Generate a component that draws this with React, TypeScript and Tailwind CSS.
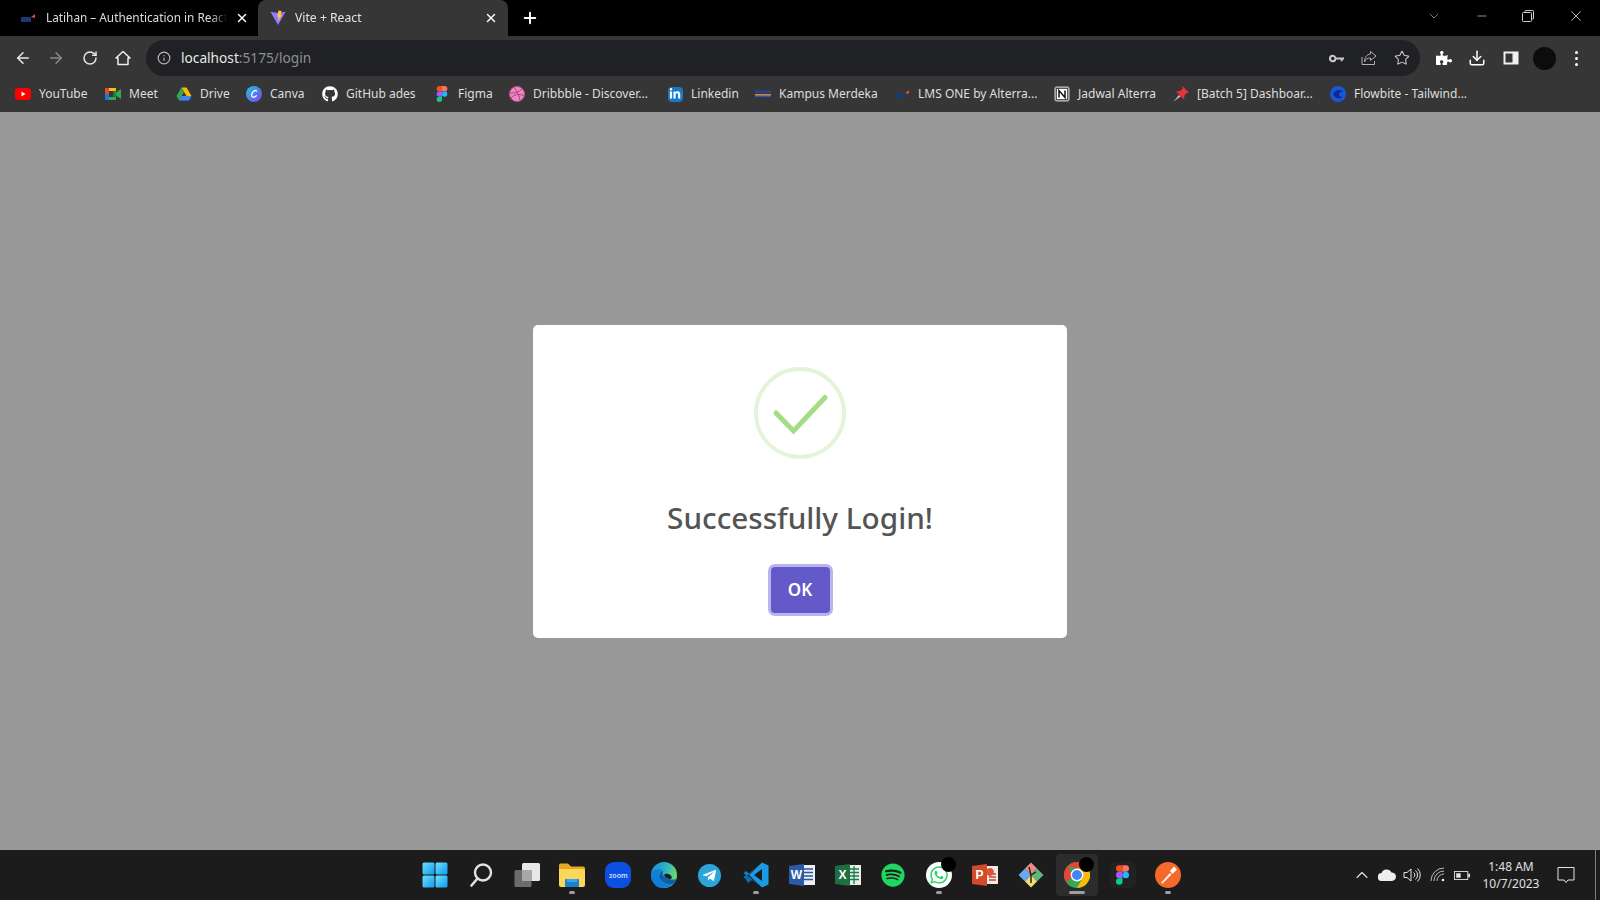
import { ReactNode } from 'react';
import { ArrowLeft, ArrowRight, RotateCw, Info, Star, X, Plus, ChevronDown, ChevronUp, Minus, Download } from 'lucide-react';
import { FaGithub, FaPuzzlePiece, FaSpotify, FaWhatsapp, FaTelegramPlane, FaLinkedinIn } from 'react-icons/fa';

const YoutubeIcon = () => (
  <svg viewBox="0 0 16 16" className="w-4 h-4">
    <rect x="0" y="2" width="16" height="12" rx="3" fill="#f00" />
    <path d="M6.5 5.5 L10.5 8 L6.5 10.5 Z" fill="#fff" />
  </svg>
);

const MeetIcon = () => (
  <svg viewBox="0 0 16 16" className="w-4 h-4">
    <rect x="0" y="2" width="4" height="6" fill="#ea4335" />
    <rect x="4" y="2" width="7" height="3" fill="#fbbc04" />
    <rect x="0" y="8" width="4" height="6" fill="#1a73e8" />
    <rect x="4" y="11" width="7" height="3" fill="#34a853" />
    <rect x="8" y="5" width="3" height="6" fill="#188038" />
    <path d="M11 6.5 L16 3 V13 L11 9.5 Z" fill="#34a853" />
  </svg>
);

const DriveIcon = () => (
  <svg viewBox="0 0 16 16" className="w-4 h-4">
    <path d="M5.5 1.5 H10.5 L15.5 10 H10.5 Z" fill="#fbbc04" />
    <path d="M5.5 1.5 L8 6 L3 14.5 L0.5 10 Z" fill="#34a853" />
    <path d="M5.5 10 H15.5 L13 14.5 H3 Z" fill="#4285f4" />
  </svg>
);

const CanvaIcon = () => (
  <svg viewBox="0 0 16 16" className="w-4 h-4">
    <defs>
      <linearGradient id="canva" x1="0" y1="0" x2="1" y2="1">
        <stop offset="0" stopColor="#1fc8db" />
        <stop offset="1" stopColor="#7a3ff2" />
      </linearGradient>
    </defs>
    <circle cx="8" cy="8" r="8" fill="url(#canva)" />
    <path d="M10.5 5 C9 3.5 6 6 5.6 9 C5.3 11.5 8 11.8 10.4 9.8" fill="none" stroke="#fff" strokeWidth="1.3" strokeLinecap="round" />
  </svg>
);

const FigmaIcon = ({ size = 'w-4 h-4' }: { size?: string }) => (
  <svg viewBox="0 0 12 18" className={size}>
    <path d="M6 0 H3 a3 3 0 0 0 0 6 H6 Z" fill="#f24e1e" />
    <path d="M6 0 H9 a3 3 0 0 1 0 6 H6 Z" fill="#ff7262" />
    <path d="M6 6 H3 a3 3 0 0 0 0 6 H6 Z" fill="#a259ff" />
    <circle cx="9" cy="9" r="3" fill="#1abcfe" />
    <path d="M6 12 H3 a3 3 0 1 0 3 3 Z" fill="#0acf83" />
  </svg>
);

const DribbbleIcon = () => (
  <svg viewBox="0 0 16 16" className="w-4 h-4" fill="none">
    <circle cx="8" cy="8" r="7.5" fill="#ea89c0" stroke="#c04f90" strokeWidth="1" />
    <path d="M5 1.5 C8 5 10.5 10 11 14.5 M1 7 C6 7.5 10 6 13 3 M2 12 C5 8.5 9.5 7.5 15 9.5" stroke="#a83a7a" strokeWidth="0.9" />
  </svg>
);

const KampusIcon = () => (
  <svg viewBox="0 0 18 16" className="w-[18px] h-4">
    <rect x="0" y="4" width="18" height="3" fill="#2d3e8f" />
    <rect x="0" y="8" width="18" height="2" fill="#c88a4a" />
    <rect x="0" y="10" width="18" height="1.5" fill="#3a4fa8" />
  </svg>
);

const OneIcon = () => (
  <svg viewBox="0 0 16 16" className="w-4 h-4">
    <rect x="1" y="7" width="10" height="5" fill="#1d3a70" />
    <path d="M11 7 L15 4 V8 Z" fill="#d9503f" />
  </svg>
);

const NotionIcon = () => (
  <svg viewBox="0 0 16 16" className="w-4 h-4">
    <rect x="0.7" y="0.7" width="14.6" height="14.6" rx="2" fill="#fff" stroke="#888" strokeWidth="1" />
    <path d="M2.2 2.2 H13.8 V13.8 H2.2 Z" fill="#fff" stroke="#111" strokeWidth="1" />
    <path d="M5 11.5 V4.5 L11 11.5 V4.5" fill="none" stroke="#111" strokeWidth="1.5" />
  </svg>
);

const PinIcon = () => (
  <svg viewBox="0 0 16 16" className="w-4 h-4">
    <path d="M0.5 15.5 L6 9 L7.5 10.5 Z" fill="#c9c9c9" />
    <path d="M9.500 0 L16 6.500 L13.500 7 L11.500 9.500 L11 13.500 L3 5.500 L7 5 L9.500 3 Z" fill="#e8323c" />
  </svg>
);

const FlowbiteIcon = () => (
  <svg viewBox="0 0 16 16" className="w-4 h-4">
    <circle cx="8" cy="8" r="8" fill="#1a56db" />
    <path d="M3 8 C5 3.5 11 3 13 6 C10 5.5 8.5 7 9 9 C10 11 12 11 13 10.5 C11 13.5 5.5 13.5 3 8 Z" fill="#0b2d8a" />
  </svg>
);

const bookmarks: { label: string; icon: ReactNode; width: string }[] = [
  { label: 'YouTube', icon: <YoutubeIcon />, width: 'w-[90px]' },
  { label: 'Meet', icon: <MeetIcon />, width: 'w-[71px]' },
  { label: 'Drive', icon: <DriveIcon />, width: 'w-[70px]' },
  { label: 'Canva', icon: <CanvaIcon />, width: 'w-[76px]' },
  { label: 'GitHub ades', icon: <FaGithub className="w-4 h-4 text-white" />, width: 'w-[112px]' },
  { label: 'Figma', icon: <FigmaIcon />, width: 'w-[75px]' },
  { label: 'Dribbble - Discover...', icon: <DribbbleIcon />, width: 'w-[158px]' },
  {
    label: 'Linkedin',
    icon: (
      <span className="w-[15px] h-[15px] rounded-sm bg-[#1a78c9] flex items-center justify-center">
        <FaLinkedinIn className="w-3 h-3 text-white" />
      </span>
    ),
    width: 'w-[88px]',
  },
  { label: 'Kampus Merdeka', icon: <KampusIcon />, width: 'w-[139px]' },
  { label: 'LMS ONE by Alterra...', icon: <OneIcon />, width: 'w-[160px]' },
  { label: 'Jadwal Alterra', icon: <NotionIcon />, width: 'w-[119px]' },
  { label: '[Batch 5] Dashboar...', icon: <PinIcon />, width: 'w-[157px]' },
  { label: 'Flowbite - Tailwind...', icon: <FlowbiteIcon />, width: 'w-[150px]' },
];

const WindowsIcon = () => (
  <svg viewBox="0 0 26 26" className="w-[26px] h-[26px]">
    <defs>
      <linearGradient id="win" x1="0" y1="0" x2="1" y2="1">
        <stop offset="0" stopColor="#6fe0fb" />
        <stop offset="1" stopColor="#0f9bf0" />
      </linearGradient>
    </defs>
    <rect x="0.5" y="0.5" width="12" height="12" rx="1.5" fill="url(#win)" />
    <rect x="13.5" y="0.5" width="12" height="12" rx="1.5" fill="url(#win)" />
    <rect x="0.5" y="13.5" width="12" height="12" rx="1.5" fill="url(#win)" />
    <rect x="13.5" y="13.5" width="12" height="12" rx="1.5" fill="url(#win)" />
  </svg>
);

const SearchIcon = () => (
  <svg viewBox="0 0 26 26" className="w-[26px] h-[26px]" fill="none">
    <circle cx="15" cy="10.5" r="8" stroke="#e2e2e2" strokeWidth="2.4" />
    <path d="M9.5 16.5 L3.5 23.5" stroke="#e2e2e2" strokeWidth="2.6" strokeLinecap="round" />
  </svg>
);

const TaskViewIcon = () => (
  <svg viewBox="0 0 26 26" className="w-[26px] h-[26px]">
    <rect x="0.5" y="8" width="17" height="17" rx="1.5" fill="#6c6c6c" />
    <rect x="8" y="1" width="18" height="18" rx="1.5" fill="#e8e8e8" />
    <rect x="8" y="8" width="10" height="11" fill="#a8a8a8" />
  </svg>
);

const ExplorerIcon = () => (
  <svg viewBox="0 0 26 24" className="w-[26px] h-6">
    <path d="M0 2 a1.5 1.5 0 0 1 1.5 -1.5 H9 L12 3.5 H24 a2 2 0 0 1 2 2 V8 H0 Z" fill="#e7a823" />
    <path d="M0 6 H24 a2 2 0 0 1 2 2 V22 a2 2 0 0 1 -2 2 H2 a2 2 0 0 1 -2 -2 Z" fill="#fbd85a" />
    <rect x="6" y="16" width="14" height="8" rx="1" fill="#1d7fd0" />
    <rect x="8" y="16" width="10" height="3" fill="#38a5ec" />
  </svg>
);

const ZoomIcon = () => (
  <div className="w-[26px] h-[26px] rounded-[9px] bg-[#0b50e0] flex items-center justify-center text-[7px] leading-none text-[#cfe0ff] font-semibold">
    zoom
  </div>
);

const EdgeIcon = () => (
  <svg viewBox="0 0 26 26" className="w-[26px] h-[26px]">
    <defs>
      <linearGradient id="edgeTop" x1="0" y1="0.2" x2="1" y2="0.5">
        <stop offset="0" stopColor="#1791d8" />
        <stop offset="0.55" stopColor="#2cb4c8" />
        <stop offset="1" stopColor="#74dd5c" />
      </linearGradient>
    </defs>
    <circle cx="13" cy="13" r="13" fill="url(#edgeTop)" />
    <path d="M0 13 C1 8 7 6 12 8 C8 9 7 12 8 15 C10 20 16 23 22 22 C17 27 9 27 5 24 C2 21 0 17 0 13 Z" fill="#1180d4" />
    <path d="M8 15 C8 11 10 9 12 9 C11 12 12 14 15 16 C18 17.500 22 18 25.500 17 C24.500 19.500 23.500 21 22 22 C16 23 10 20 8 15 Z" fill="#0d5fae" />
    <path d="M13 13 C14 11 19 11 20.500 14.500 C21 16 20.500 16.800 19.500 17 C16.500 17 14 15.500 13 13 Z" fill="#1c1c1c" />
  </svg>
);

const VscodeIcon = () => (
  <svg viewBox="0 0 26 26" className="w-[26px] h-[26px]">
    <path d="M19 0.5 L25.5 3.5 V22.5 L19 25.5 L6 13 Z" fill="#1a9be8" />
    <path d="M19 7 L11 13 L19 19 Z" fill="#1c1c1c" />
    <path d="M19 0.5 L4 14 L0.5 11 L3 9 L6 11.5 Z" fill="#0f7fc9" />
    <path d="M2.5 17 L0.5 15 L3 13 L6 14.5 L19 25.5 L9 18 L5 21 Z" fill="#0d6cb0" />
  </svg>
);

const WordIcon = () => (
  <svg viewBox="0 0 26 24" className="w-[26px] h-6">
    <rect x="9" y="2" width="17" height="20" fill="#e9eff7" />
    <path d="M14 6 H24 M14 9.5 H24 M14 13 H24 M14 16.5 H24" stroke="#2b5797" strokeWidth="1.6" />
    <path d="M0 3 L15 1 V23 L0 21 Z" fill="#2a5aa8" />
    <text x="7.5" y="16" textAnchor="middle" fontSize="12" fontWeight="700" fill="#fff" fontFamily="Liberation Sans">W</text>
  </svg>
);

const ExcelIcon = () => (
  <svg viewBox="0 0 26 24" className="w-[26px] h-6">
    <rect x="11" y="2" width="15" height="20" fill="#e6f0e9" />
    <path d="M15 6 H24 M15 9.5 H24 M15 13 H24 M15 16.5 H24 M19 3 V21" stroke="#1f7a47" strokeWidth="1.3" />
    <path d="M0 3 L15 1 V23 L0 21 Z" fill="#1d6f42" />
    <text x="7.5" y="16" textAnchor="middle" fontSize="12" fontWeight="700" fill="#fff" fontFamily="Liberation Sans">X</text>
  </svg>
);

const PowerpointIcon = () => (
  <svg viewBox="0 0 26 24" className="w-[26px] h-6">
    <rect x="11" y="3" width="15" height="18" fill="#f5e7e1" />
    <path d="M17 11 H24 M17 14 H24 M17 17 H24" stroke="#c8452b" strokeWidth="1.5" />
    <path d="M18 5 a4 4 0 1 1 -0.1 0 Z" fill="#d9553a" />
    <path d="M0 3 L15 1 V23 L0 21 Z" fill="#d24a2a" />
    <text x="7.5" y="16" textAnchor="middle" fontSize="12" fontWeight="700" fill="#fff" fontFamily="Liberation Sans">P</text>
  </svg>
);

const DiamondIcon = () => (
  <svg viewBox="0 0 26 26" className="w-[26px] h-[26px]">
    <path d="M13 0.5 L19 6.5 L13 13 L7 6.5 Z" fill="#f08a8a" />
    <path d="M0.5 13 L7 6.5 L13 13 L7 19.5 Z" fill="#6aa9f2" />
    <path d="M25.5 13 L19 6.5 L13 13 L19 19.5 Z" fill="#5fb878" />
    <path d="M13 25.5 L7 19.5 L13 13 L19 19.5 Z" fill="#f5de6f" />
    <path d="M11 5 L13 13 V21 M13 13 L18 10" stroke="#1c1c1c" strokeWidth="1.4" fill="none" />
  </svg>
);

const ChromeIcon = () => (
  <svg viewBox="0 0 26 26" className="w-[26px] h-[26px]">
    <circle cx="13" cy="13" r="13" fill="#34a853" />
    <path d="M13 0 A13 13 0 0 1 24.3 6.5 L13 6.5 L13 6.5 L4.2 3.5 A13 13 0 0 1 13 0 Z" fill="#ea4335" />
    <path d="M4.2 3.5 L9 14 L2.5 20.5 A13 13 0 0 1 4.2 3.5 Z" fill="#ea4335" />
    <path d="M24.3 6.5 A13 13 0 0 1 13 26 L18.5 16 L13 6.5 Z" fill="#fbbc04" />
    <circle cx="13" cy="13" r="6.4" fill="#fff" />
    <circle cx="13" cy="13" r="5" fill="#4285f4" />
  </svg>
);

const PostmanIcon = () => (
  <svg viewBox="0 0 26 26" className="w-[26px] h-[26px]">
    <circle cx="13" cy="13" r="13" fill="#f5692c" />
    <path d="M6 21 L15 11 L16.5 12.5 L7.5 21.5 Z" fill="#fff" />
    <path d="M15 9 L19 4.5 L22 7.5 L17.5 12 Z" fill="#fff" />
  </svg>
);

const taskbarApps: { key: string; icon: ReactNode; mark?: string; badge?: boolean; active?: boolean }[] = [
  { key: 'start', icon: <WindowsIcon /> },
  { key: 'search', icon: <SearchIcon /> },
  { key: 'taskview', icon: <TaskViewIcon /> },
  { key: 'explorer', icon: <ExplorerIcon />, mark: 'w-[6px]' },
  { key: 'zoom', icon: <ZoomIcon /> },
  { key: 'edge', icon: <EdgeIcon /> },
  { key: 'telegram', icon: <div className="w-[23px] h-[23px] rounded-full bg-[#2ba5dc] flex items-center justify-center"><FaTelegramPlane className="w-[15px] h-[15px] text-white" /></div> },
  { key: 'vscode', icon: <VscodeIcon />, mark: 'w-[6px]' },
  { key: 'word', icon: <WordIcon /> },
  { key: 'excel', icon: <ExcelIcon /> },
  { key: 'spotify', icon: <FaSpotify className="w-[24px] h-[24px] text-[#1ed760]" /> },
  { key: 'whatsapp', icon: <div className="w-[26px] h-[26px] rounded-full bg-white flex items-center justify-center"><FaWhatsapp className="w-[20px] h-[20px] text-[#25d366]" /></div>, mark: 'w-[6px]', badge: true },
  { key: 'powerpoint', icon: <PowerpointIcon /> },
  { key: 'diamond', icon: <DiamondIcon /> },
  { key: 'chrome', icon: <ChromeIcon />, mark: 'w-4', badge: true, active: true },
  { key: 'figma', icon: <div className="w-[26px] h-[26px] rounded-md bg-[#222] flex items-center justify-center"><FigmaIcon size="w-[13px] h-5" /></div> },
  { key: 'postman', icon: <PostmanIcon />, mark: 'w-[6px]' },
];

function Tab({ title, icon, active, width }: { title: string; icon: ReactNode; active?: boolean; width: string }) {
  return (
    <div className={`${width} h-9 flex items-center shrink-0 ${active ? 'bg-[#363636] rounded-t-lg text-[#e4e4e4] pl-3 pr-[10px]' : 'text-[#dcdcdc] pl-[20px] pr-[9px]'}`}>
      <span className="w-4 mr-[9px] flex justify-center shrink-0">{icon}</span>
      <span className={`flex-1 overflow-hidden whitespace-nowrap [mask-image:linear-gradient(to_left,transparent,black_16px)] ${active ? 'text-[12.2px]' : 'ml-px text-[11.8px]'}`}>{title}</span>
      <X className="w-[14px] h-[14px] ml-2 shrink-0 text-white" strokeWidth={2.4} />
    </div>
  );
}

function App() {
  return (
    <div className="w-[1600px] h-[900px] flex flex-col overflow-hidden bg-[#989898] font-['Noto_Sans','Open_Sans',sans-serif]">
      {/* Tab strip */}
      <div className="h-9 bg-black flex items-center shrink-0">
        <Tab title="Latihan – Authentication in React" icon={<OneIcon />} width="w-[258px]" />
        <Tab
          title="Vite + React"
          active
          width="w-[250px]"
          icon={
            <svg viewBox="0 0 18 18" className="w-[18px] h-[18px]">
              <path d="M0.5 2 L9 3.5 L17.5 2 L9 17 Z" fill="#8f7bff" />
              <path d="M9.5 0.5 L13 1 L12 6 L13.5 5.5 L9 13 L9.8 7.5 L8 8 Z" fill="#ffc62e" />
            </svg>
          }
        />
        <Plus className="w-[18px] h-[18px] ml-[13px] text-white" strokeWidth={2.6} />
        <div className="ml-auto flex items-center text-[#d0d0d0]">
          <ChevronDown className="w-[16px] h-[16px] mr-[33px] -mt-1 text-[#9a9a9a]" strokeWidth={1.2} />
          <Minus className="w-[14px] h-[14px] mr-[33px] -mt-1" strokeWidth={1.2} />
          <svg viewBox="0 0 12 12" className="w-3 h-3 mr-[33px] -mt-1" fill="none" stroke="#d0d0d0" strokeWidth="1">
            <rect x="0.5" y="2.5" width="9" height="9" rx="1" />
            <path d="M3 2.5 V1.5 a1 1 0 0 1 1 -1 H10.5 a1 1 0 0 1 1 1 V8 a1 1 0 0 1 -1 1 H9.5" />
          </svg>
          <X className="w-[18px] h-[18px] mr-[15px] -mt-1" strokeWidth={1.1} />
        </div>
      </div>

      {/* Toolbar */}
      <div className="h-[40px] bg-[#363636] flex items-end shrink-0">
        <div className="h-9 w-full flex items-center pl-[14px]">
          <ArrowLeft className="w-[18px] h-[18px] text-[#e8e8e8]" strokeWidth={2} />
          <ArrowRight className="w-[18px] h-[18px] ml-[15px] text-[#8a8a8a]" strokeWidth={2} />
          <RotateCw className="w-[16px] h-[16px] ml-[17px] text-[#e8e8e8]" strokeWidth={2.2} />
          <svg viewBox="0 0 16 16" className="w-4 h-4 ml-[17px]" fill="none" stroke="#f0f0f0" strokeWidth="1.5">
            <path d="M1 8 L8 1.5 L15 8 H13 V14.500 H3 V8 Z" strokeLinejoin="round" />
          </svg>
          <div className="w-[1274px] h-9 ml-[15px] rounded-full bg-[#202124] flex items-center pl-[11px] pr-[10px]">
            <Info className="w-[14px] h-[14px] text-[#b8b8b8]" strokeWidth={2} />
            <span className="ml-[10px] text-[13.7px] text-[#e8e8e8]">
              localhost<span className="text-[#8f8f8f]">:5175/login</span>
            </span>
            <div className="ml-auto flex items-center gap-[17px] text-[#c8c8c8]">
              <svg viewBox="0 0 16 16" className="w-[15px] h-[15px]" fill="#c8c8c8">
                <path fillRule="evenodd" d="M4 4 a4 4 0 0 1 3.8 2.8 H16 V9 H14.5 V11 H12.5 V9 H7.8 A4 4 0 1 1 4 4 Z M4 6.2 a1.8 1.8 0 1 0 0 3.6 a1.8 1.8 0 0 0 0 -3.6 Z" />
              </svg>
              <svg viewBox="0 0 16 16" className="w-[16px] h-[16px]" fill="none" stroke="#b0b0b0" strokeWidth="1">
                <path d="M1 7 V14.500 H13.500 V11" />
                <path d="M9.500 1.500 L15 6 L9.500 10.500 V8 C6.500 8 4.500 9 3.500 12 C3.500 7.500 5.500 4.500 9.500 4 Z" />
              </svg>
              <Star className="w-[16px] h-[16px]" strokeWidth={1.6} />
            </div>
          </div>
          <FaPuzzlePiece className="w-[16px] h-[16px] ml-[16px] text-white" />
          <Download className="w-[18px] h-[18px] ml-[16px] text-white" strokeWidth={2} />
          <svg viewBox="0 0 16 16" className="w-4 h-4 ml-[17px]">
            <rect x="0.500" y="1.500" width="15" height="13" fill="#f0f0f0" />
            <rect x="2.500" y="3.500" width="7" height="9" fill="#363636" />
          </svg>
          <div className="w-[23px] h-[23px] ml-[14px] rounded-full bg-[#0c0c0c]" />
          <div className="ml-[19px] flex flex-col gap-[3px]">
            <span className="w-[3px] h-[3px] rounded-full bg-white" />
            <span className="w-[3px] h-[3px] rounded-full bg-white" />
            <span className="w-[3px] h-[3px] rounded-full bg-white" />
          </div>
        </div>
      </div>

      {/* Bookmarks bar */}
      <div className="h-9 bg-[#363636] flex items-center pl-[15px] shrink-0">
        {bookmarks.map((b) => (
          <div key={b.label} className={`${b.width} shrink-0 flex items-center`}>
            <span className="w-4 flex justify-center shrink-0">{b.icon}</span>
            <span className="ml-[8px] text-[12px] text-[#dedede] whitespace-nowrap">{b.label}</span>
          </div>
        ))}
      </div>

      {/* Page with dialog */}
      <div className="flex-1 flex justify-center items-start pt-[213px]">
        <div className="w-[534px] h-[313px] bg-white rounded-[5px] flex flex-col items-center pt-[42px]">
          <div className="w-[92px] h-[92px] rounded-full border-4 border-[#a5dc86]/30 relative">
            <svg viewBox="0 0 92 92" className="absolute -inset-1 w-[92px] h-[92px]" fill="none">
              <path d="M22 46 L39.500 64 L71 30.500" stroke="#a5dc86" strokeWidth="5" strokeLinecap="round" />
            </svg>
          </div>
          <h2 className="mt-[39px] text-[29.7px] leading-[40px] font-medium text-[#545454]">Successfully Login!</h2>
          <button className="mt-[29px] w-[59px] h-[46px] rounded-[4px] bg-[#6459c9] text-white text-[17px] font-semibold ring-[3px] ring-[#b9b3ee]">
            OK
          </button>
        </div>
      </div>

      {/* Taskbar */}
      <div className="h-[50px] bg-[#1c1c1c] flex items-center shrink-0 pl-[412px]">
        <div className="flex items-center">
          {taskbarApps.map((app) => (
            <div key={app.key} className="w-[45.85px] h-[42px] flex justify-center">
              <div className={`w-[42px] h-[42px] relative flex items-center justify-center shrink-0 rounded ${app.active ? 'bg-[#2c2c2c]' : ''}`}>
                {app.icon}
                {app.badge && <span className="absolute top-[3px] right-[4px] w-[15px] h-[15px] rounded-full bg-black" />}
                {app.mark && <span className={`absolute bottom-[2px] left-1/2 -translate-x-1/2 h-[3px] rounded-full bg-[#9e9e9e] ${app.mark}`} />}
              </div>
            </div>
          ))}
        </div>
        <div className="ml-auto self-stretch flex items-center text-[#e4e4e4]">
          <ChevronUp className="w-[20px] h-[20px]" strokeWidth={1.3} />
          <svg viewBox="0 0 18 12" className="w-[18px] h-3 ml-[6px]" fill="#eee">
            <path d="M4 12 a4 4 0 0 1 -0.5 -8 a5.500 5.500 0 0 1 10 -0.500 a4.200 4.200 0 0 1 0.500 8.500 Z" />
          </svg>
          <svg viewBox="0 0 18 16" className="w-[18px] h-4 ml-[7px]" fill="none" stroke="#e4e4e4" strokeWidth="1">
            <path d="M1 5.500 H4 L8 2 V14 L4 10.500 H1 Z" />
            <path d="M10.500 5.500 a3 3 0 0 1 0 5 M12.500 3.500 a6 6 0 0 1 0 9 M14.500 1.500 a9 9 0 0 1 0 13" />
          </svg>
          <svg viewBox="0 0 16 16" className="w-4 h-4 ml-[9px]" fill="none" stroke="#b8b8b8" strokeWidth="1">
            <path d="M1 14 a13 13 0 0 1 13 -13 M4 14 a10 10 0 0 1 10 -10 M7 14 a7 7 0 0 1 7 -7" />
            <circle cx="13" cy="13" r="1.300" fill="#eee" stroke="none" />
          </svg>
          <svg viewBox="0 0 18 10" className="w-[16px] h-[9px] ml-[8px]" fill="none">
            <rect x="0.500" y="0.500" width="15" height="9" stroke="#e4e4e4" />
            <rect x="2.500" y="2.500" width="5" height="5" fill="#e4e4e4" />
            <rect x="16" y="3" width="2" height="4" fill="#e4e4e4" />
          </svg>
          <div className="w-[76px] ml-[3px] flex flex-col items-center text-[12px] leading-[17px] text-[#e0e0e0]">
            <span>1:48 AM</span>
            <span>10/7/2023</span>
          </div>
          <svg viewBox="0 0 18 18" className="w-[18px] h-[18px] ml-[8px]" fill="none" stroke="#e4e4e4" strokeWidth="1">
            <path d="M1 1.500 H17 V14 H11 L9 16.500 L7 14 H1 Z" />
          </svg>
          <div className="w-px self-stretch bg-[#808080] ml-[20px] mr-[4px]" />
        </div>
      </div>
    </div>
  );
}

export default App;
